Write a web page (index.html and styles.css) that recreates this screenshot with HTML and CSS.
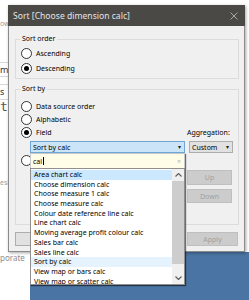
FILE: index.html
```html
<!doctype html>
<html lang="en">
  <head>
    <meta charset="utf-8">
    <title>Sort</title>
    <link rel="stylesheet" href="styles.css">
  </head>
  <body>
    <div class="backdrop">
      <span class="bd-ow">ow</span>
      <span class="bd-tab">m</span>
      <span class="bd-tab bd-tab2">s</span>
      <span class="bd-big">ti</span>
      <span class="bd-esi">esi</span>
      <span class="bd-porate">porate</span>
    </div>
    <div class="blue-area"></div>

    <div class="dialog">
      <div class="titlebar">
        <span class="title">Sort [Choose dimension calc]</span>
        <svg class="close" width="8" height="8" viewBox="0 0 8 8">
          <path d="M0.5 0.5 L7.5 7.5 M7.5 0.5 L0.5 7.5" stroke="#a8a6a3" stroke-width="1"/>
        </svg>
      </div>
      <div class="dlg-body">
        <fieldset class="group group-order">
          <legend>Sort order</legend>
          <label class="row radio-row"><span class="radio"></span>Ascending</label>
          <label class="row radio-row"><span class="radio checked"></span>Descending</label>
        </fieldset>

        <fieldset class="group group-by">
          <legend>Sort by</legend>
          <label class="row radio-row r13 first"><span class="radio"></span>Data source order</label>
          <label class="row radio-row r13"><span class="radio"></span>Alphabetic</label>
          <div class="row r13 split">
            <label class="radio-row"><span class="radio checked"></span>Field</label>
            <span class="agg-label">Aggregation:</span>
          </div>
          <div class="row split combo-row">
            <div class="combo-wrap">
              <div class="combo open">
                <span>Sort by calc</span>
                <span class="caret">&#9662;</span>
              </div>
              <div class="popup">
                <div class="search">
                  <span class="search-text">cal<span class="cursor"></span></span>
                  <span class="clear-x">&times;</span>
                </div>
                <div class="list">
                  <ul class="items">
                    <li class="hot">Area chart calc</li>
                    <li>Choose dimension calc</li>
                    <li>Choose measure 1 calc</li>
                    <li>Choose measure calc</li>
                    <li>Colour date reference line calc</li>
                    <li>Line chart calc</li>
                    <li>Moving average profit colour calc</li>
                    <li>Sales bar calc</li>
                    <li>Sales line calc</li>
                    <li class="current">Sort by calc</li>
                    <li>View map or bars calc</li>
                    <li>View map or scatter calc</li>
                  </ul>
                  <div class="scrollbar">
                    <span class="sb-btn">
                      <svg width="7" height="4" viewBox="0 0 7 4"><path d="M0.5 3.5 L3.5 0.5 L6.5 3.5" fill="none" stroke="#606060" stroke-width="1.2"/></svg>
                    </span>
                    <span class="sb-thumb"></span>
                    <span class="sb-track"></span>
                    <span class="sb-btn">
                      <svg width="7" height="4" viewBox="0 0 7 4"><path d="M0.5 0.5 L3.5 3.5 L6.5 0.5" fill="none" stroke="#606060" stroke-width="1.2"/></svg>
                    </span>
                  </div>
                </div>
              </div>
            </div>
            <div class="combo small">
              <span>Custom</span>
              <span class="caret">&#9662;</span>
            </div>
          </div>
          <div class="row radio-row manual"><span class="radio"></span></div>
          <div class="row split manual-area">
            <div class="manual-list"></div>
            <div class="side-buttons">
              <button class="btn disabled">Up</button>
              <button class="btn disabled">Down</button>
            </div>
          </div>
        </fieldset>

        <div class="footer">
          <button class="btn clear" aria-label="Clear"></button>
          <button class="btn disabled apply">Apply</button>
        </div>
      </div>
    </div>
  </body>
</html>
```

FILE: styles.css
```css
* {
  box-sizing: border-box;
}
html, body {
  margin: 0;
  padding: 0;
}
body {
  width: 249px;
  height: 300px;
  overflow: hidden;
  position: relative;
  background-color: #ffffff;
  font-family: "Noto Sans", "Open Sans", sans-serif;
  font-size: 7px;
  color: #000;
}

/* app behind the dialog */
.backdrop {
  width: 30px;
  display: flex;
  flex-direction: column;
  color: #9a9a9a;
}
.bd-ow {
  margin-top: 19px;
  line-height: 10px;
}
.bd-tab {
  margin-top: 33px;
  height: 15px;
  line-height: 13px;
  border-top: 1px solid #d8d8d8;
  border-bottom: 1px solid #d8d8d8;
  color: #333;
  font-size: 9px;
}
.bd-tab2 {
  margin-top: 7px;
  height: 16px;
}
.bd-big {
  margin-top: 0;
  line-height: 14px;
  font-family: "DejaVu Sans Mono", monospace;
  font-size: 13px;
  color: #555;
}
.bd-esi {
  margin-top: 64px;
  line-height: 10px;
  color: #a0a0a0;
}
.bd-porate {
  margin-top: 65px;
  line-height: 10px;
  font-size: 8px;
  color: #8c8c8c;
}
.blue-area {
  position: absolute;
  left: 30px;
  right: 0;
  top: 252px;
  bottom: 0;
  background-color: #4a74a3;
}

/* dialog window */
.dialog {
  position: absolute;
  left: 8px;
  top: 5px;
  width: 237px;
  height: 247px;
  display: flex;
  flex-direction: column;
  box-shadow: 1px 1px 3px rgba(0, 0, 0, 0.35);
}
.titlebar {
  height: 21px;
  flex: none;
  background-color: #4b4946;
  display: flex;
  align-items: center;
  justify-content: space-between;
  padding: 0 7px 0 5px;
}
.title {
  color: #e4e4e4;
  font-size: 8.6px;
}
.dlg-body {
  flex: 1;
  background-color: #f0f0f0;
  border: 1px solid #8a8a8a;
  border-top: none;
  padding: 8px 5px 0 6px;
}

.group {
  margin: 0;
  border: 1px solid #dcdcdc;
  padding: 0 5px 0 5px;
  min-width: 0;
}
.group legend {
  padding: 0 2px;
  margin-left: -1px;
  line-height: 10px;
}
.group-order {
  padding-bottom: 2px;
}
.group-order .row:first-of-type {
  margin-top: 2px;
}
.group-by {
  margin-top: 5px;
  padding-bottom: 21px;
}

.row {
  display: flex;
  align-items: center;
}
.radio-row {
  display: flex;
  align-items: center;
  height: 15px;
}
.r13 {
  height: 13px;
}
.r13.first {
  margin-top: 6px;
}
.radio {
  width: 11px;
  height: 11px;
  border: 1px solid #333;
  border-radius: 50%;
  background-color: #fff;
  margin-right: 4px;
  display: flex;
  align-items: center;
  justify-content: center;
}
.radio.checked::after {
  content: "";
  width: 5px;
  height: 5px;
  border-radius: 50%;
  background-color: #000;
}
.split {
  justify-content: space-between;
}
.agg-label {
  width: 46px;
}

.combo-row {
  margin-top: 2px;
  align-items: flex-start;
}
.combo-wrap {
  position: relative;
  margin-left: 9px;
  width: 155px;
}
.combo {
  height: 12px;
  display: flex;
  align-items: center;
  justify-content: space-between;
  padding: 0 3px 0 2px;
  border: 1px solid #adadad;
  background-color: #e1e1e1;
}
.combo.open {
  background-color: #cce4f7;
  border-color: #6ea6d8;
}
.combo.small {
  width: 44px;
  margin-right: 0;
}
.caret {
  font-size: 6px;
  color: #222;
}

/* dropdown popup */
.popup {
  position: absolute;
  top: 100%;
  left: 0;
  width: 155px;
  z-index: 5;
  box-shadow: 1px 1px 1px rgba(0, 0, 0, 0.55);
}
.search {
  height: 15px;
  display: flex;
  align-items: center;
  justify-content: space-between;
  padding: 0 3px 0 2px;
  background-color: #fffde8;
  border: 1px solid #c9c9c9;
  border-bottom: none;
}
.search-text {
  display: flex;
  align-items: center;
}
.cursor {
  width: 1px;
  height: 8px;
  background-color: #000;
  margin-left: 1px;
}
.clear-x {
  color: #b0b0b0;
  font-size: 7px;
}
.list {
  height: 117px;
  display: flex;
  border: 1px solid #8f8f8f;
  background-color: #fff;
  overflow: hidden;
}
.items {
  flex: 1;
  list-style: none;
  margin: 0;
  padding: 1px 0 0 0;
}
.items li {
  height: 9.7px;
  line-height: 9.7px;
  padding-left: 3px;
  white-space: nowrap;
  overflow: hidden;
}
.items li.hot {
  background-color: #cce8ff;
}
.items li.current {
  background-color: #e5f3ff;
}
.scrollbar {
  width: 12px;
  display: flex;
  flex-direction: column;
  background-color: #f0f0f0;
}
.sb-btn {
  height: 12px;
  display: flex;
  align-items: center;
  justify-content: center;
  flex: none;
}
.sb-thumb {
  height: 83px;
  flex: none;
  background-color: #cdcdcd;
}
.sb-track {
  flex: 1;
}

.manual {
  height: 14px;
}
.manual-area {
  align-items: flex-start;
}
.side-buttons {
  width: 46px;
  display: flex;
  flex-direction: column;
  margin-top: 3px;
}
.btn {
  font-family: inherit;
  font-size: 7px;
  height: 14px;
  padding: 0;
  border: 1px solid #adadad;
  background-color: #e1e1e1;
  color: #000;
}
.btn.disabled {
  background-color: #cccccc;
  border-color: #bfbfbf;
  color: #a0a0a0;
}
.side-buttons .btn {
  height: 15px;
  width: 45px;
}
.side-buttons .btn + .btn {
  margin-top: 4px;
  height: 14px;
}

.footer {
  margin-top: 7px;
  display: flex;
  justify-content: space-between;
}
.footer .btn {
  width: 45px;
}
.footer .apply {
  width: 51px;
  margin-right: 1px;
}
```
